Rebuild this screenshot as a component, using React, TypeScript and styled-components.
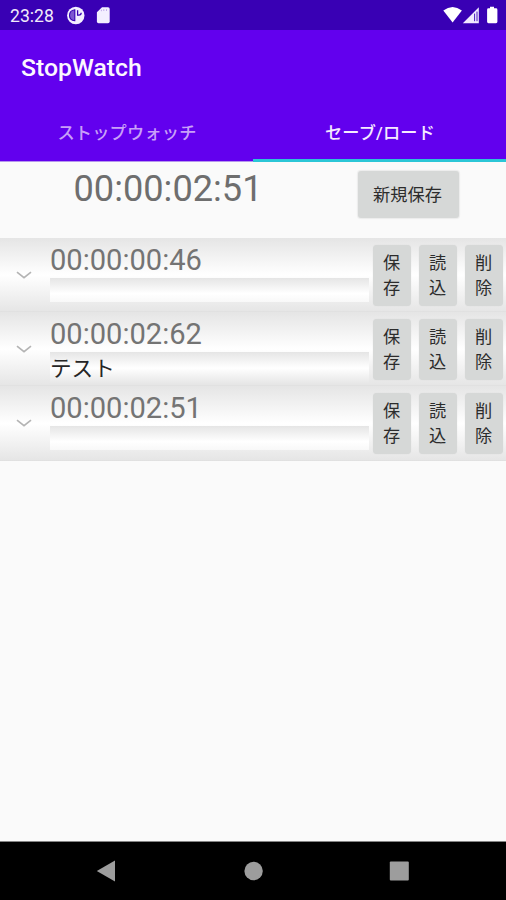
import React from "react";
import styled, { createGlobalStyle } from "styled-components";

const GlobalStyle = createGlobalStyle`
  * { box-sizing: border-box; }
  body {
    margin: 0;
    background: #fafafa;
    font-family: Roboto, "Noto Sans CJK JP", sans-serif;
  }
`;

const Screen = styled.div`
  width: 506px;
  height: 900px;
  display: flex;
  flex-direction: column;
  overflow: hidden;
  background: #fafafa;
`;

const StatusBar = styled.header`
  height: 30px;
  flex: none;
  display: flex;
  align-items: center;
  justify-content: space-between;
  background: #3900b4;
  color: #f1eafa;
`;

const Clock = styled.span`
  width: 57px;
  padding: 2px 0 0 10px;
  font-size: 17.6px;
  line-height: 20px;
`;

const StatusGroup = styled.div`
  display: flex;
  align-items: center;
  height: 30px;
`;

const AppBar = styled.div`
  height: 74px;
  flex: none;
  display: flex;
  align-items: center;
  padding: 1px 21px 0;
  background: #6200ee;
`;

const Title = styled.h1`
  margin: 0;
  color: #fbf6ff;
  font-size: 24.8px;
  font-weight: 500;
  line-height: 30px;
`;

const Tabs = styled.nav`
  height: 58px;
  flex: none;
  display: grid;
  grid-template-columns: 1fr 1fr;
  background: #6200ee;
  box-shadow: inset 0 -1px #b596ed;
`;

const Tab = styled.button<{ $active?: boolean }>`
  height: 58px;
  border: 0;
  border-bottom: 3px solid ${(p) => (p.$active ? "#2bc6d6" : "transparent")};
  background: none;
  padding: 2px 0 0 1px;
  color: ${(p) => (p.$active ? "#f5eaff" : "#c9a0f8")};
  font: 500 17.2px/24px Roboto, "Noto Sans CJK JP", sans-serif;
  letter-spacing: 0.2px;
`;

const Current = styled.section`
  height: 76px;
  flex: none;
  display: flex;
  align-items: flex-start;
  justify-content: space-between;
  padding: 5px 47px 0 73.5px;
`;

const CurrentTime = styled.div`
  color: #6e6e6e;
  font-size: 36.2px;
  line-height: 43px;
`;

const SaveNew = styled.button`
  width: 101px;
  height: 47px;
  margin-top: 4px;
  padding: 1px 2px 0 0;
  border: 0;
  border-radius: 3px;
  background: #d6d8d7;
  box-shadow: 0 0 1px 1px rgba(214, 216, 215, 0.4);
  color: #2c2c2c;
  font: 400 17.2px/24px Roboto, "Noto Sans CJK JP", sans-serif;
`;

const List = styled.main`
  flex: 1;
`;

const Row = styled.div`
  height: 74.2px;
  display: flex;
  background: linear-gradient(#e5e5e5 0, #fff 50%, #e6e6e6 98%, #dedede 100%);
`;

const Expander = styled.div`
  width: 50px;
  flex: none;
  display: flex;
  align-items: center;
  justify-content: center;
  padding-right: 3px;
`;

const Entry = styled.div`
  width: 319px;
  padding-top: 4px;
`;

const EntryTime = styled.div`
  height: 36px;
  color: #747474;
  font-size: 29.1px;
  line-height: 36px;
`;

const Memo = styled.div<{ $filled: boolean }>`
  height: ${(p) => (p.$filled ? 32 : 24)}px;
  background: linear-gradient(#e5e5e5 0, #fff ${(p) => (p.$filled ? 50 : 65)}%, ${(p) => (p.$filled ? "#e6e6e6" : "#f8f8f8")} 100%);
  color: #262626;
  font: 400 21.6px/30px "Noto Sans CJK JP", sans-serif;
`;

const Actions = styled.div`
  display: flex;
  gap: 8px;
  padding: 7px 0 0 4px;
`;

const Action = styled.button`
  width: 38px;
  height: 61px;
  padding: 0 10px 3px 9px;
  border: 0;
  border-radius: 4px;
  background: #d6d8d7;
  box-shadow: 0 0 1px rgba(205, 207, 206, 0.7);
  color: #2c2c2c;
  font: 400 17.2px/25.5px "Noto Sans CJK JP", sans-serif;
  word-break: break-all;
`;

const NavBar = styled.footer`
  height: 59px;
  flex: none;
  display: flex;
  background: #000;
  border-top: 1px solid #858585;
`;

const records = [
  { time: "00:00:00:46", memo: "" },
  { time: "00:00:02:62", memo: "テスト" },
  { time: "00:00:02:51", memo: "" },
];

export default function App() {
  return (
    <Screen>
      <GlobalStyle />
      <StatusBar>
        <StatusGroup>
          <Clock>23:28</Clock>
          <svg width="60" height="30" viewBox="57 0 60 30">
            <circle cx="75.8" cy="15.5" r="8.7" fill="#f3efff" />
            <path d="M74.8 9.8C71.2 10.3 69.5 12.8 69.5 15.5s1.6 4.8 5.3 5.2z" fill="#7d58d0" stroke="#3900b4" strokeWidth="1.1" />
            <path d="M77.6 10.2v5h1.2c1.6 0 2.4-1 2.4-2.4" fill="none" stroke="#3900b4" strokeWidth="1.3" />
            <path d="M102 7.3h6q1.7 0 1.7 1.7v12.6q0 1.6-1.7 1.6H98.5q-1.6 0-1.6-1.6V12.2z" fill="#f3efff" />
            <path d="M101.4 9.6v1.6M103.8 9.2v1.8M106.5 9.2v1.8" stroke="#b49be5" strokeWidth=".8" />
          </svg>
        </StatusGroup>
        <svg width="66" height="30" viewBox="440 0 66 30">
          <path d="M443.3 10.6q9.3-7.3 18.6 0L452.6 22.5z" fill="#fff" />
          <path d="M478.8 7.3V23.2H462.8z" fill="#f0eaff" />
          <path d="M474.6 13.6v7.6M477 11.6v9.6" stroke="#4a18bd" strokeWidth="1" />
          <path d="M490 6.7h4v1.6h2q1.4 0 1.4 1.4v12.1q0 1.4-1.4 1.4h-7.5q-1.4 0-1.4-1.4V9.7q0-1.4 1.4-1.4H490z" fill="#fff" />
        </svg>
      </StatusBar>
      <AppBar>
        <Title>StopWatch</Title>
      </AppBar>
      <Tabs>
        <Tab>ストップウォッチ</Tab>
        <Tab $active>セーブ/ロード</Tab>
      </Tabs>
      <Current>
        <CurrentTime>00:00:02:51</CurrentTime>
        <SaveNew>新規保存</SaveNew>
      </Current>
      <List>
        {records.map((r, i) => (
          <Row key={i}>
            <Expander>
              <svg width="18" height="12" viewBox="0 0 18 12">
                <path d="M2 3.2L9 8.6l7-5.4" fill="none" stroke="#b4b4b4" strokeWidth="1.7" />
              </svg>
            </Expander>
            <Entry>
              <EntryTime>{r.time}</EntryTime>
              <Memo $filled={r.memo !== ""}>{r.memo}</Memo>
            </Entry>
            <Actions>
              <Action>保存</Action>
              <Action>読込</Action>
              <Action>削除</Action>
            </Actions>
          </Row>
        ))}
      </List>
      <NavBar>
        <svg width="506" height="58" viewBox="0 842 506 58" fill="#9d9d9d">
          <path d="M96.8 871l18.2-10.6v21.2z" />
          <circle cx="253.6" cy="871" r="9.2" />
          <rect x="389.8" y="861.5" width="19" height="19" rx="1" />
        </svg>
      </NavBar>
    </Screen>
  );
}
